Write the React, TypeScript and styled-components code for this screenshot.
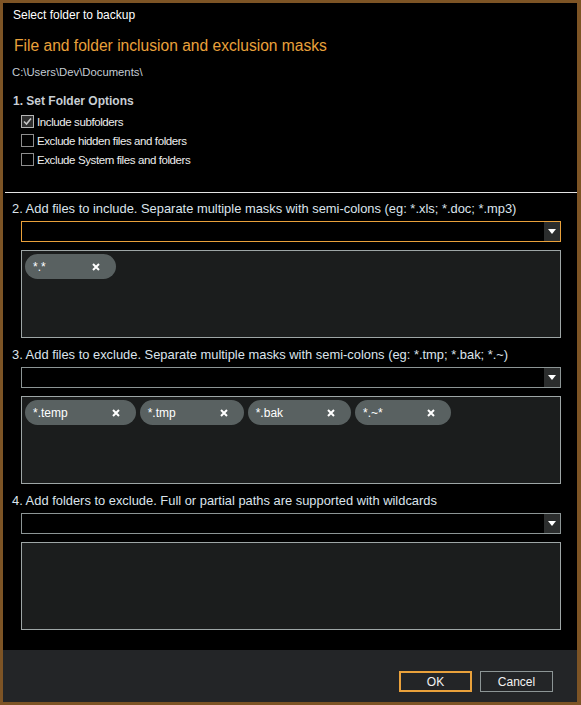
import React from 'react'
import styled, { createGlobalStyle } from 'styled-components'

const GlobalStyle = createGlobalStyle`
  html, body {
    margin: 0;
    padding: 0;
    background: #000;
  }
  body {
    font-family: 'Liberation Sans', Arial, sans-serif;
  }
`

const Window = styled.div`
  width: 581px;
  height: 705px;
  box-sizing: border-box;
  border: 3px solid #7d5425;
  border-right-width: 4px;
  display: flex;
  flex-direction: column;
  background: #000;
`

const Body = styled.div`
  flex: 1;
  display: flex;
  flex-direction: column;
  background: #000;
`

const TitleBar = styled.div`
  height: 24px;
  display: flex;
  align-items: center;
  padding-left: 10px;
  color: #ffffff;
  font-size: 12px;
`

const Header = styled.div`
  margin-top: 9px;
  padding-left: 11px;
  height: 20px;
  line-height: 20px;
  color: #e9a13b;
  font-size: 15.6px;
`

const PathText = styled.div`
  margin-top: 9px;
  padding-left: 9px;
  height: 14px;
  line-height: 14px;
  color: #c4ccd4;
  font-size: 11.3px;
`

const Heading = styled.div`
  margin-top: 15px;
  padding-left: 10px;
  height: 14px;
  line-height: 14px;
  color: #c8ced4;
  font-size: 12px;
  font-weight: bold;
`

const OptionList = styled.div`
  margin-top: 4px;
  padding-left: 18px;
  display: flex;
  flex-direction: column;
`

const OptionRow = styled.label`
  height: 19px;
  display: flex;
  align-items: center;
  gap: 3px;
  color: #eeeeee;
  font-size: 11.5px;
  letter-spacing: -0.4px;
`

const Box = styled.span<{ $checked?: boolean }>`
  width: 13px;
  height: 13px;
  box-sizing: border-box;
  border: 1px solid ${p => (p.$checked ? '#b4b4b4' : '#8e8e8e')};
  background: ${p => (p.$checked ? '#2e2e2e' : '#000')};
  display: flex;
  align-items: center;
  justify-content: center;
`

const Separator = styled.div`
  margin: 23px 0 0 2px;
  height: 1px;
  background: #e4e4e4;
`

const Section = styled.div<{ $first?: boolean }>`
  margin-top: ${p => (p.$first ? '9px' : '10px')};
  display: flex;
  flex-direction: column;
`

const SectionLabel = styled.div`
  padding-left: 9px;
  height: 14px;
  line-height: 14px;
  color: #dce4ec;
  font-size: 12.9px;
`

const Combo = styled.div<{ $focused?: boolean }>`
  margin: 5px 16px 0 18px;
  height: 21px;
  box-sizing: border-box;
  border: 1px solid ${p => (p.$focused ? '#e9a13b' : '#8c9595')};
  background: #000;
  display: flex;
  justify-content: flex-end;
`

const ComboButton = styled.div`
  width: 16px;
  background: #2b2d2d;
  display: flex;
  align-items: center;
  justify-content: center;
`

const TagBox = styled.div`
  margin: 8px 16px 0 18px;
  height: 88px;
  box-sizing: border-box;
  border: 1px solid #9ea6a6;
  background: #1b1d1d;
  padding: 3px;
  display: flex;
  flex-wrap: wrap;
  align-content: flex-start;
  gap: 4px;
`

const Chip = styled.div`
  height: 25px;
  border-radius: 13px;
  background: #596161;
  display: flex;
  align-items: center;
  padding: 0 16px 0 8px;
  color: #ffffff;
  font-size: 12px;
`

const ChipText = styled.span`
  min-width: 15px;
`

const ChipClose = styled.span`
  margin-left: 44px;
  display: flex;
  align-items: center;
`

const Footer = styled.div`
  height: 52px;
  background: #232527;
  display: flex;
  justify-content: flex-end;
  align-items: flex-end;
  gap: 8px;
  padding: 0 24px 10px 0;
  box-sizing: border-box;
`

const Button = styled.button<{ $primary?: boolean }>`
  width: 73px;
  height: 21px;
  box-sizing: border-box;
  border: ${p => (p.$primary ? '2px solid #e9a13b' : '1px solid #8c9595')};
  background: #232527;
  color: #f2f2f2;
  font-family: 'Liberation Sans', Arial, sans-serif;
  font-size: 12px;
  padding: 0;
`

const CheckMark = () => (
  <svg width='9' height='9' viewBox='0 0 9 9'>
    <path d='M1 4.5 L3.5 7 L8 1.5' fill='none' stroke='#c4c4c4' strokeWidth='1.6' />
  </svg>
)

const Arrow = () => (
  <svg width='8' height='5' viewBox='0 0 8 5'>
    <path d='M0 0 H8 L4 5 Z' fill='#ffffff' />
  </svg>
)

const CloseIcon = () => (
  <svg width='8' height='8' viewBox='0 0 8 8'>
    <path d='M1 1 L7 7 M7 1 L1 7' stroke='#ffffff' strokeWidth='2' />
  </svg>
)

interface MaskSectionProps {
  label: string
  masks: string[]
  focused?: boolean
  first?: boolean
}

const MaskSection: React.FC<MaskSectionProps> = ({ label, masks, focused, first }) => (
  <Section $first={first}>
    <SectionLabel>{label}</SectionLabel>
    <Combo $focused={focused}>
      <ComboButton>
        <Arrow />
      </ComboButton>
    </Combo>
    <TagBox>
      {masks.map(m => (
        <Chip key={m}>
          <ChipText>{m}</ChipText>
          <ChipClose>
            <CloseIcon />
          </ChipClose>
        </Chip>
      ))}
    </TagBox>
  </Section>
)

const options = [
  { label: 'Include subfolders', checked: true },
  { label: 'Exclude hidden files and folders', checked: false },
  { label: 'Exclude System files and folders', checked: false }
]

const App: React.FC = () => {
  return (
    <>
      <GlobalStyle />
      <Window>
        <Body>
          <TitleBar>Select folder to backup</TitleBar>
          <Header>File and folder inclusion and exclusion masks</Header>
          <PathText>C:\Users\Dev\Documents\</PathText>
          <Heading>1. Set Folder Options</Heading>
          <OptionList>
            {options.map(o => (
              <OptionRow key={o.label}>
                <Box $checked={o.checked}>{o.checked && <CheckMark />}</Box>
                {o.label}
              </OptionRow>
            ))}
          </OptionList>
          <Separator />
          <MaskSection
            first
            focused
            label='2. Add files to include. Separate multiple masks with semi-colons (eg: *.xls; *.doc; *.mp3)'
            masks={['*.*']}
          />
          <MaskSection
            label='3. Add files to exclude. Separate multiple masks with semi-colons (eg: *.tmp; *.bak; *.~)'
            masks={['*.temp', '*.tmp', '*.bak', '*.~*']}
          />
          <MaskSection label='4. Add folders to exclude. Full or partial paths are supported with wildcards' masks={[]} />
        </Body>
        <Footer>
          <Button $primary>OK</Button>
          <Button>Cancel</Button>
        </Footer>
      </Window>
    </>
  )
}

export default App
